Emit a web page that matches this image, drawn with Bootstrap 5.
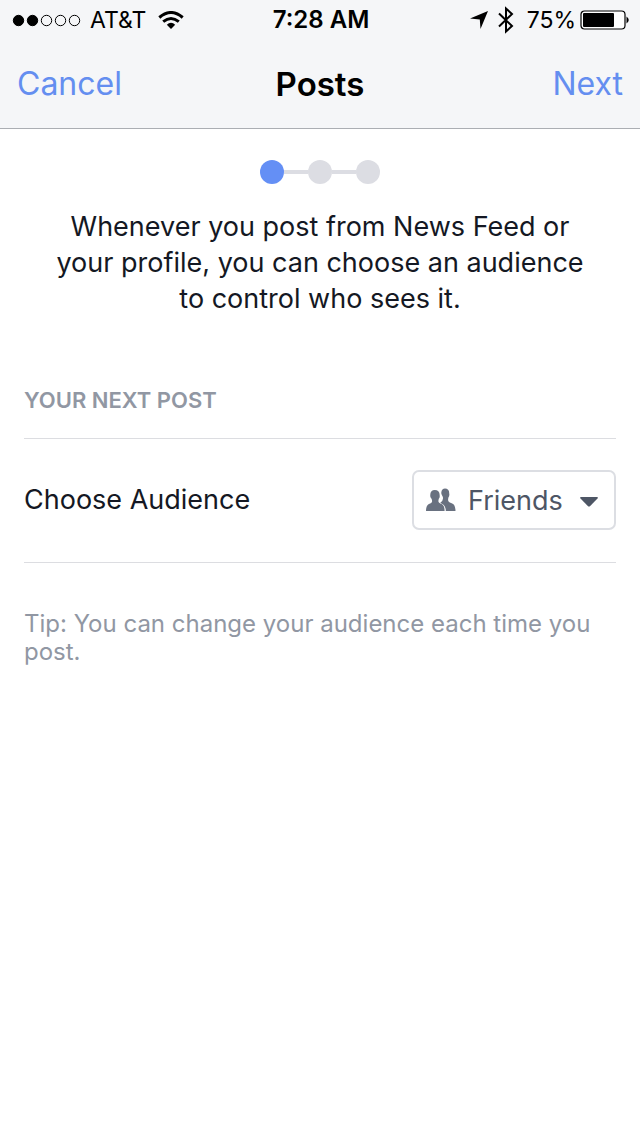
<!DOCTYPE html>
<html lang="en">
<head>
<meta charset="utf-8">
<meta name="viewport" content="width=device-width, initial-scale=1">
<title>Posts</title>
<link href="https://cdn.jsdelivr.net/npm/bootstrap@5.3.0/dist/css/bootstrap.min.css" rel="stylesheet">
<style>
  body { font-family: Inter, "Liberation Sans", sans-serif; color: #141823; background: #fff; }
  svg { display: block; flex: none; }
  .top-area { background: #f5f6f8; border-bottom: 1px solid #abaeb3; color: #000; }
  .status-row { height: 40px; padding: 0 10px 0 12px; font-size: 23px; line-height: 40px; }
  .status-time { font-size: 24px; font-weight: 600; }
  .status-side { flex: 1 1 0; }
  .title-row { height: 88px; padding: 0 17px; font-size: 32px; line-height: 88px; }
  .title-row h1 { font-size: 33px; line-height: 88px; font-weight: 600; }
  .title-row a { flex: 1 1 0; color: #648ef0; text-decoration: none; }
  .steps { padding-top: 31px; }
  .step-dot { width: 24px; height: 24px; border-radius: 50%; background: #dcdde3; }
  .step-dot.current { background: #648ff5; }
  .step-line { width: 24px; height: 4px; background: #dcdde3; }
  .intro { margin-top: 25px; padding: 0 50px; font-size: 27px; line-height: 36px; }
  .section { margin: 67px 24px 0; }
  .section h2 { font-size: 22px; line-height: 32px; font-weight: 600; color: #9197a3; padding-bottom: 22px; }
  .choice-row { border-top: 1px solid #dcdde1; border-bottom: 1px solid #dcdde1; padding: 31px 0 32px; font-size: 27px; }
  .audience { width: 204px; color: #4e5665; }
  .audience select { appearance: none; width: 100%; height: 60px; padding: 2px 40px 0 54px; border: 2px solid #dcdee3; border-radius: 7px; background: #fff; color: inherit; font-size: 27px; }
  .audience svg { position: absolute; top: 0; bottom: 0; margin: auto 0; pointer-events: none; }
  .people { left: 14px; }
  .audience .caret { right: 18px; top: 4px; }
  .tip { margin-top: 47px; font-size: 24px; line-height: 28px; color: #9197a3; }
</style>
</head>
<body>
<header class="top-area">
  <div class="status-row d-flex align-items-center">
    <div class="status-side d-flex align-items-center">
      <svg width="70" height="14" viewBox="0 0 70 14" aria-label="Signal strength"><g stroke="#000" stroke-width="1"><circle cx="6.500" cy="7.500" r="5.200"/><circle cx="20.500" cy="7.500" r="5.200"/><g fill="none"><circle cx="34.500" cy="7.500" r="5.200"/><circle cx="48.500" cy="7.500" r="5.200"/><circle cx="62.500" cy="7.500" r="5.200"/></g></g></svg>
      <span class="ms-2">AT&amp;T</span>
      <svg class="ms-2" width="30" height="18" viewBox="-4 0 30 18" aria-label="Wi-Fi"><g fill="none" stroke="#000" stroke-width="3"><path d="M1.300 6.500Q13-3.500 24.700 6.500"/><path d="M5.200 10.700Q13 4.300 20.800 10.700"/></g><path d="M8.800 13.700Q13 9.800 17.200 13.700L13 18Z"/></svg>
    </div>
    <div class="status-time">7:28 AM</div>
    <div class="status-side d-flex align-items-center justify-content-end">
      <svg width="18" height="18" viewBox="0 0 18 18" aria-label="Location"><path d="M18 0 10.500 18 9.800 8.500 0 7.600Z"/></svg>
      <svg class="ms-2" width="23" height="28" viewBox="0 0 23 28" aria-label="Bluetooth"><path d="M3 7.500 16 20 10 25.500V2.500L16 8 3 20.500" fill="none" stroke="#000" stroke-width="2"/></svg>
      <span class="ms-2">75%</span>
      <svg class="ms-1" width="50" height="20" viewBox="0 0 50 20" aria-label="Battery"><rect x="1" y="1" width="44" height="18" rx="3.500" fill="#fff" stroke="#000" stroke-width="1.200"/><rect x="3" y="3" width="31" height="14" rx="1"/><path d="M46.500 6.500Q51 10 46.500 13.500Z"/></svg>
    </div>
  </div>
  <nav class="title-row d-flex align-items-center">
    <a href="#">Cancel</a>
    <h1 class="m-0">Posts</h1>
    <a href="#" class="text-end">Next</a>
  </nav>
</header>
<main>
  <div class="steps d-flex justify-content-center align-items-center" aria-label="Step 1 of 3">
    <span class="step-dot current"></span><span class="step-line"></span><span class="step-dot"></span><span class="step-line"></span><span class="step-dot"></span>
  </div>
  <p class="intro text-center mb-0">Whenever you post from News Feed or your profile, you can choose an audience to control who sees it.</p>
  <section class="section">
    <h2 class="m-0">YOUR NEXT POST</h2>
    <div class="choice-row d-flex align-items-center justify-content-between">
      <label for="audience">Choose Audience</label>
      <div class="audience position-relative">
        <select id="audience"><option>Friends</option><option>Public</option><option>Only Me</option></select>
        <svg class="people" width="30" height="24" viewBox="0 0 30 24" fill="#697180" aria-hidden="true"><path d="M15.300 4.500C15.500 1.800 17 .5 19 .5c2.700 0 4.400 1.800 4.200 5 .4 1.500 0 3-.8 4-.4 2-.6 3.200.4 4.200 1.200 1.200 4.800 1.500 5.800 4.300.6 1.500.9 3.400.9 5h-9.700c.1-3-1-5.800-3.500-7.100-1-.5-1.700-.9-1.900-1.400 1.600-1.200 2-1.500 2.100-2.500.8-1.500.6-2.800-.1-4-.6-1-1.200-2-1.100-3.500Z"/><path d="M8.800 2C12 2 13.800 4 13.600 7c.4 1.500 0 2.800-.8 3.800-.4 1.800-.8 3 .4 4 1.400 1 3.700 1.100 4.700 3.700.5 1.400.7 3 .7 4.500H0c0-1.500.2-3.100.7-4.500 1-2.600 3.300-2.700 4.700-3.700 1.100-1 .7-2.200.2-4-.8-1-1.600-2.300-1.300-3.800C4.100 4 5.800 2 8.800 2Z"/></svg>
        <svg class="caret" width="18" height="10" viewBox="0 0 18 10" fill="#4e5665" aria-hidden="true"><path d="M1 0H17Q18.500.3 17.500 1.500L10.200 9Q9 10 7.800 9L.5 1.500Q-.5.3 1 0Z"/></svg>
      </div>
    </div>
    <p class="tip mb-0">Tip: You can change your audience each time you post.</p>
  </section>
</main>
<script src="https://cdn.jsdelivr.net/npm/bootstrap@5.3.0/dist/js/bootstrap.bundle.min.js"></script>
</body>
</html>
